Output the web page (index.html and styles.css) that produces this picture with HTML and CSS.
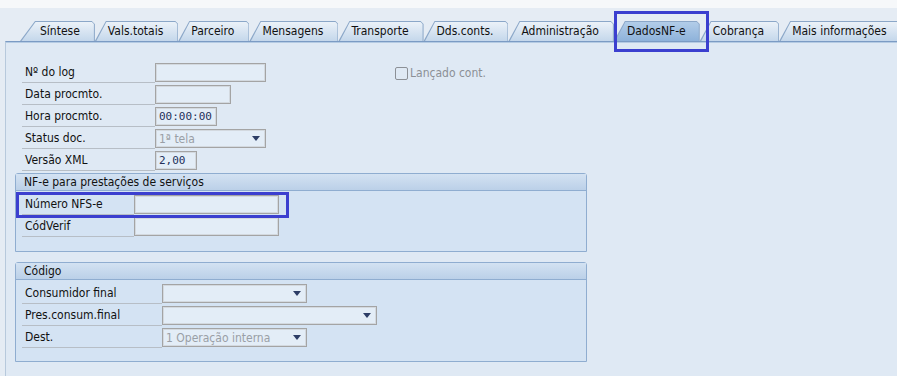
FILE: index.html
```html
<!DOCTYPE html>
<html lang="pt">

<head>
    <meta charset="UTF-8">
    <title>DadosNF-e</title>
    <link rel="stylesheet" href="styles.css">
</head>

<body>
    <div class="topbar"></div>

    <div class="screen">
        <div class="tabstrip">
            <div class="tab tab-first">Síntese</div>
            <div class="tab">Vals.totais</div>
            <div class="tab">Parceiro</div>
            <div class="tab">Mensagens</div>
            <div class="tab">Transporte</div>
            <div class="tab">Dds.conts.</div>
            <div class="tab">Administração</div>
            <div class="tab tab-active">DadosNF-e</div>
            <div class="tab">Cobrança</div>
            <div class="tab">Mais informações</div>
        </div>
        <div class="mark mark-tab"></div>

        <div class="panel">
            <div class="head-fields">
                <div class="field-list">
                    <div class="row">
                        <span class="label label-head">Nº do log</span>
                        <span class="input w111"></span>
                    </div>
                    <div class="row">
                        <span class="label label-head">Data procmto.</span>
                        <span class="input w76"></span>
                    </div>
                    <div class="row">
                        <span class="label label-head">Hora procmto.</span>
                        <span class="input w62 mono">00:00:00</span>
                    </div>
                    <div class="row">
                        <span class="label label-head">Status doc.</span>
                        <span class="input select w111 disabled">1ª tela<i class="arrow"></i></span>
                    </div>
                    <div class="row">
                        <span class="label label-head">Versão XML</span>
                        <span class="input w42 mono">2,00</span>
                    </div>
                </div>
                <div class="check"><span class="box"></span>Lançado cont.</div>
            </div>

            <div class="group">
                <div class="group-title">NF-e para prestações de serviços</div>
                <div class="group-body">
                    <div class="row">
                        <span class="label label-nfs">Número NFS-e</span>
                        <span class="input w145"></span>
                    </div>
                    <div class="row">
                        <span class="label label-nfs">CódVerif</span>
                        <span class="input w145"></span>
                    </div>
                </div>
                <div class="mark mark-field"></div>
            </div>

            <div class="group group-code">
                <div class="group-title">Código</div>
                <div class="group-body">
                    <div class="row">
                        <span class="label label-code">Consumidor final</span>
                        <span class="input select w145"><i class="arrow"></i></span>
                    </div>
                    <div class="row">
                        <span class="label label-code">Pres.consum.final</span>
                        <span class="input select w215"><i class="arrow"></i></span>
                    </div>
                    <div class="row">
                        <span class="label label-code">Dest.</span>
                        <span class="input select w145 disabled">1 Operação interna<i class="arrow"></i></span>
                    </div>
                </div>
            </div>
        </div>
    </div>
</body>

</html>
```

FILE: styles.css
```css
body {
    margin: 0;
    padding: 0;
    font-family: 'DejaVu Sans Condensed', 'DejaVu Sans', sans-serif;
    font-stretch: condensed;
    font-size: 12px;
    color: #111;
    background: #e5ecf4;
    height: 376px;
    overflow: hidden;
}

.topbar {
    height: 8px;
    background: #f6f8fa;
}

.screen {
    position: relative;
}

/* tabs */

.tabstrip {
    display: flex;
    padding: 13px 0 0 20px;
    height: 20px;
}

.tab {
    position: relative;
    z-index: 0;
    height: 20px;
    line-height: 21px;
    padding: 0 15px 0 13px;
    background: #8ba7c8;
    clip-path: polygon(0 100%, 11px 0, calc(100% - 3px) 0, 100% 3px, 100% 100%);
    white-space: nowrap;
}

.tab::before {
    content: '';
    position: absolute;
    inset: 0;
    z-index: -1;
    background: linear-gradient(#edf3f9, #c4d7eb);
    clip-path: polygon(1.5px 100%, 11.5px 1px, calc(100% - 3px) 1px, calc(100% - 1px) 3px, calc(100% - 1px) 100%);
}

.tab-first {
    padding-left: 20px;
    clip-path: polygon(0 100%, 15px 0, calc(100% - 3px) 0, 100% 3px, 100% 100%);
}

.tab-first::before {
    clip-path: polygon(1.5px 100%, 15.5px 1px, calc(100% - 3px) 1px, calc(100% - 1px) 3px, calc(100% - 1px) 100%);
}

.tab-active {
    padding-right: 14px;
}

.tab-active::before {
    background: linear-gradient(#b4cee9, #8eb2da);
}

.mark {
    position: absolute;
    border: 3px solid #3b3fcf;
    box-sizing: border-box;
    pointer-events: none;
}

.mark-tab {
    left: 614px;
    top: 3px;
    width: 95px;
    height: 41px;
}

/* panel */

.panel {
    margin-left: 5px;
    border-top: 1px solid #7b9bc4;
    border-left: 1px solid #b7c9dc;
    background: #dfe9f4;
    padding: 19px 0 14px 9px;
    box-shadow: inset 0 1px 0 #b5cbe3;
}

.head-fields {
    display: flex;
    padding-left: 7px;
}

.field-list {
    width: 260px;
}

.row {
    display: flex;
    height: 22px;
}

.label {
    box-sizing: border-box;
    height: 22px;
    line-height: 23px;
    padding-left: 3px;
    border-bottom: 1px solid #b7bec6;
    white-space: nowrap;
}

.label-head {
    width: 133px;
}

.label-nfs {
    width: 112px;
}

.label-code {
    width: 140px;
}

.input {
    box-sizing: border-box;
    display: flex;
    align-items: center;
    justify-content: space-between;
    height: 19px;
    margin-top: 2px;
    padding: 0 3px;
    border: 1px solid #a4a4a4;
    box-shadow: inset 0 0 0 1px #d3d9df;
    background: #e3edf7;
    color: #1f2a44;
    white-space: nowrap;
}

.mono {
    font-family: 'DejaVu Sans Mono', 'Liberation Mono', monospace;
    font-stretch: normal;
    font-size: 11px;
    color: #23305a;
}

.disabled {
    color: #9a9fa6;
}

.arrow {
    margin-left: auto;
    margin-right: 2px;
    border-left: 4px solid transparent;
    border-right: 4px solid transparent;
    border-top: 5px solid #2c3d66;
}

.w42 { width: 42px; }
.w62 { width: 62px; }
.w76 { width: 76px; }
.w111 { width: 111px; }
.w145 { width: 145px; }
.w215 { width: 215px; }

.check {
    display: flex;
    align-items: center;
    gap: 2px;
    height: 22px;
    margin-left: 113px;
    margin-top: 1px;
    color: #8c9096;
}

.check .box {
    width: 11px;
    height: 11px;
    border: 1px solid #8c9096;
    border-radius: 2px;
}

/* group boxes */

.group {
    position: relative;
    width: 572px;
    box-sizing: border-box;
    margin-top: 2px;
    border: 1px solid #8fadd0;
    border-radius: 3px 3px 0 0;
    background: #d4e3f3;
}

.group-code {
    margin-top: 10px;
}

.group-title {
    height: 16px;
    line-height: 17px;
    padding-left: 8px;
    background: linear-gradient(#d3e2f2, #bbd0e8);
    border-bottom: 1px solid #8fadd0;
}

.group-body {
    padding: 2px 0 14px 6px;
}

.group-code .group-body {
    padding-bottom: 13px;
}

.mark-field {
    left: 0;
    top: 18px;
    width: 273px;
    height: 26px;
}
```
